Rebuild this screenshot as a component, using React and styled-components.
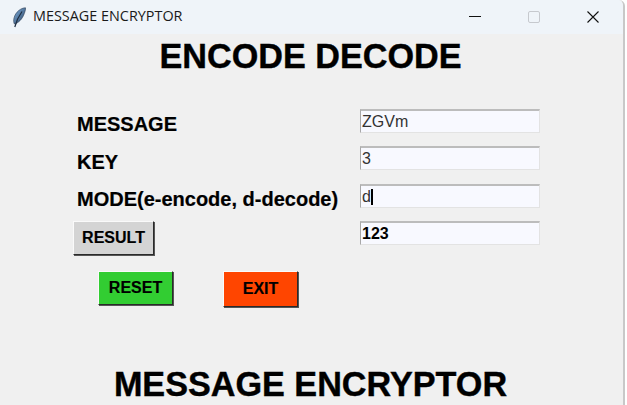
import React from "react"
import styled, { createGlobalStyle } from "styled-components"

const GlobalStyle = createGlobalStyle`
  html, body {
    margin: 0;
    padding: 0;
    background: #fff;
    overflow: hidden;
  }
`

const Window = styled.div`
  width: 623px;
  height: 405px;
  background: #f0f0f0;
  border-right: 2px solid #c8c8c8;
  border-top-right-radius: 6px;
  font-family: "Liberation Sans", Arial, sans-serif;
  color: #000;
  display: flex;
  flex-direction: column;
  overflow: hidden;
`

const TitleBar = styled.div`
  height: 34px;
  flex: none;
  background: #eff4f9;
  display: flex;
  align-items: center;
  padding-left: 12px;
`

const AppName = styled.span`
  margin-left: 7px;
  font-family: "Open Sans", sans-serif;
  font-size: 14.4px;
  color: #1a1a1a;
  padding-bottom: 3px;
`

const WindowControls = styled.div`
  margin-left: auto;
  padding-right: 1px;
  display: flex;
`

const WindowControl = styled.div`
  width: 59px;
  height: 30px;
  display: flex;
  align-items: center;
  justify-content: center;
`

const Heading = styled.h1`
  margin: 4px 0 0;
  padding-right: 2px;
  text-align: center;
  font-size: 34.2px;
  line-height: 37px;
  font-weight: 700;
  -webkit-text-stroke: 0.4px #000;
`

const Form = styled.div`
  margin: 27px 0 0 77px;
  display: grid;
  grid-template-columns: 283px 180px;
  grid-auto-rows: 37.5px;
  align-items: center;
`

const Label = styled.div`
  font-size: 20px;
  font-weight: 700;
  padding-top: 8px;
  -webkit-text-stroke: 0.2px #000;
`

const Entry = styled.div`
  height: 24px;
  box-sizing: border-box;
  background: #f8f9ff;
  border: 1px solid #e3e3e3;
  border-top: 2px solid #bcbcbc;
  border-left: 1px solid #a8a8a8;
  padding: 1px 0 0 1px;
  font-size: 16px;
  font-weight: ${p => (p.$bold ? 700 : 400)};
  color: ${p => (p.$bold ? "#000" : "#333")};
  line-height: 20px;
  display: flex;
  align-items: center;
`

const Caret = styled.span`
  width: 2px;
  height: 16px;
  background: #000;
`

const Bevel = styled.button`
  box-sizing: border-box;
  display: block;
  width: ${p => p.$width}px;
  height: ${p => p.$height}px;
  padding: 0;
  background: ${p => p.$bg};
  border: 1px solid;
  border-color: #fafafa #2a2a2a #2a2a2a #fafafa;
  box-shadow: 1px 1px 0 #555;
  font-family: "Liberation Sans", Arial, sans-serif;
  font-size: 16px;
  font-weight: 700;
  color: #000;
  -webkit-text-stroke: 0.15px #000;
`

const ResultSlot = styled.div`
  margin: 10px 0 0 -4px;
`

const Actions = styled.div`
  margin: 19px 0 0 98px;
  display: flex;
  gap: 50px;
`

const Footer = styled.div`
  margin-top: auto;
  padding-bottom: 2px;
`

const FeatherIcon = () => (
  <svg width="14" height="21" viewBox="0 0 14 21">
    <defs>
      <linearGradient id="quill" x1="0" y1="0" x2="1" y2="1">
        <stop offset="0" stopColor="#7fb0e0" />
        <stop offset="1" stopColor="#2b4260" />
      </linearGradient>
    </defs>
    <path d="M13.500 .8C9 .8 3.500 5 2 11c-.6 2.500-.4 4.500.4 6 4-1 8.100-5 9.900-10.500C13 4.500 13.800 2.500 13.500 .8z" fill="url(#quill)" stroke="#2a3a50" strokeWidth=".6" />
    <path d="M10 4.500C7.500 8 4.500 13 2.800 20" stroke="#1d2c40" strokeWidth="1.200" fill="none" />
  </svg>
)

const App = () => (
  <>
    <GlobalStyle />
    <Window>
      <TitleBar>
        <FeatherIcon />
        <AppName>MESSAGE ENCRYPTOR</AppName>
        <WindowControls>
          <WindowControl>
            <svg width="12" height="12"><path d="M0 5.500h12" stroke="#111" strokeWidth="1" /></svg>
          </WindowControl>
          <WindowControl>
            <svg width="12" height="12"><rect x=".5" y=".5" width="11" height="11" rx="1.500" fill="none" stroke="#c6c9ce" /></svg>
          </WindowControl>
          <WindowControl>
            <svg width="12" height="12"><path d="M.5.500l11 11M11.500.500l-11 11" stroke="#111" strokeWidth="1.100" /></svg>
          </WindowControl>
        </WindowControls>
      </TitleBar>
      <Heading>ENCODE DECODE</Heading>
      <Form>
        <Label>MESSAGE</Label>
        <Entry>ZGVm</Entry>
        <Label>KEY</Label>
        <Entry>3</Entry>
        <Label>MODE(e-encode, d-decode)</Label>
        <Entry>d<Caret /></Entry>
        <ResultSlot>
          <Bevel $width={81} $height={34} $bg="#d4d4d4">RESULT</Bevel>
        </ResultSlot>
        <Entry $bold>123</Entry>
      </Form>
      <Actions>
        <Bevel $width={75} $height={34} $bg="#32cd32">RESET</Bevel>
        <Bevel $width={75} $height={36} $bg="#ff4500">EXIT</Bevel>
      </Actions>
      <Footer>
        <Heading>MESSAGE ENCRYPTOR</Heading>
      </Footer>
    </Window>
  </>
)

export default App
